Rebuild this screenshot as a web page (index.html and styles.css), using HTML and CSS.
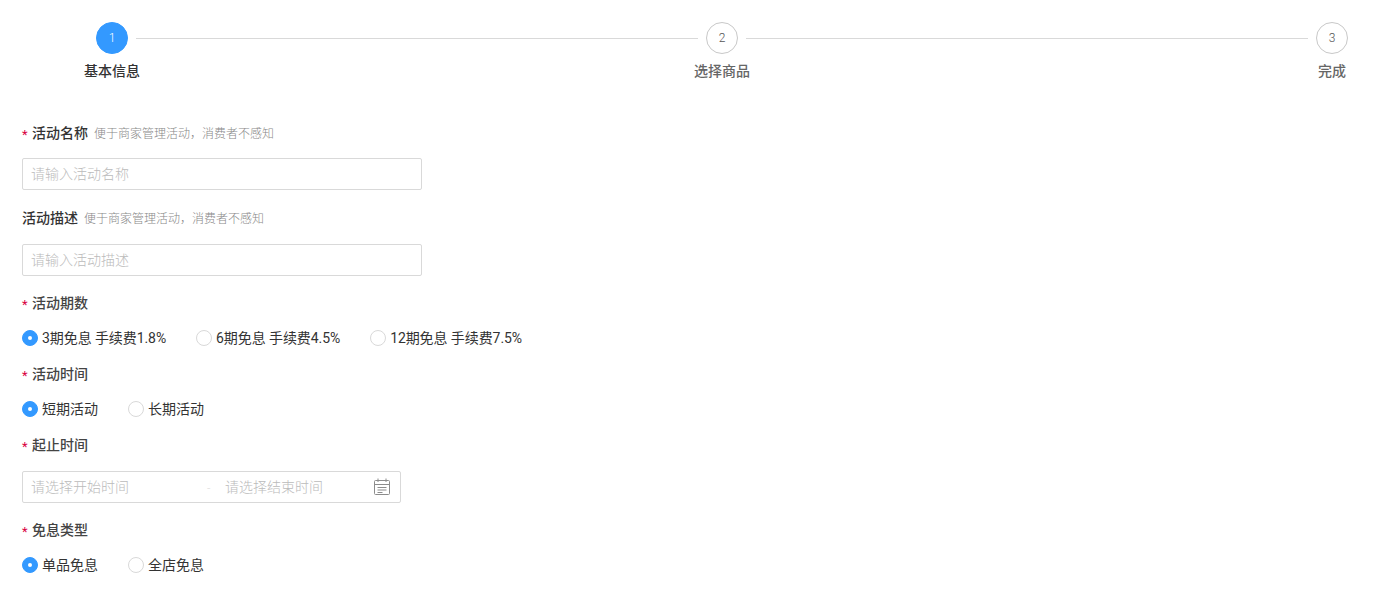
FILE: index.html
```html
<!DOCTYPE html>
<html lang="zh">
<head>
<meta charset="utf-8">
<title>活动</title>
<link rel="stylesheet" href="styles.css">
</head>
<body>
<div class="steps">
  <div class="step active"><span class="dot">1</span><span class="step-label">基本信息</span></div>
  <div class="line"></div>
  <div class="step"><span class="dot">2</span><span class="step-label">选择商品</span></div>
  <div class="line"></div>
  <div class="step"><span class="dot">3</span><span class="step-label">完成</span></div>
</div>
<form class="form">
  <div class="item item-name">
    <div class="label label-strong"><i class="req">*</i><b>活动名称</b><span class="hint">便于商家管理活动，消费者不感知</span></div>
    <div class="input">请输入活动名称</div>
  </div>
  <div class="item item-desc">
    <div class="label label-strong"><b>活动描述</b><span class="hint">便于商家管理活动，消费者不感知</span></div>
    <div class="input">请输入活动描述</div>
  </div>
  <div class="item item-radio">
    <div class="label"><i class="req">*</i><b>活动期数</b></div>
    <div class="radios radios-fee">
      <span class="radio on"><i></i>3期免息 手续费1.8%</span>
      <span class="radio"><i></i>6期免息 手续费4.5%</span>
      <span class="radio"><i></i>12期免息 手续费7.5%</span>
    </div>
  </div>
  <div class="item item-radio">
    <div class="label"><i class="req">*</i><b>活动时间</b></div>
    <div class="radios">
      <span class="radio on"><i></i>短期活动</span>
      <span class="radio"><i></i>长期活动</span>
    </div>
  </div>
  <div class="item item-date">
    <div class="label"><i class="req">*</i><b>起止时间</b></div>
    <div class="date">
      <span class="date-start">请选择开始时间</span>
      <span class="date-sep">-</span>
      <span class="date-end">请选择结束时间</span>
      <svg class="cal" width="18" height="18" viewBox="0 0 18 18" fill="none" stroke="#8c8c8c" stroke-width="1">
        <rect x="1.5" y="2.5" width="15" height="14" rx="1"/>
        <path d="M1.5 6.5h15M5 .5v3.5M13 .5v3.5M4.5 9.5h9M4.5 12h9M4.5 14.5h5"/>
      </svg>
    </div>
  </div>
  <div class="item item-radio">
    <div class="label"><i class="req">*</i><b>免息类型</b></div>
    <div class="radios">
      <span class="radio on"><i></i>单品免息</span>
      <span class="radio"><i></i>全店免息</span>
    </div>
  </div>
</form>
</body>
</html>
```
FILE: styles.css
```css
* { box-sizing: border-box; }
html, body { margin: 0; padding: 0; }
body {
  height: 613px;
  overflow: hidden;
  background: #fff;
  color: #333;
  font-family: Roboto, "Noto Sans CJK SC", sans-serif;
  font-size: 14px;
}
.steps {
  display: flex;
  align-items: flex-start;
  padding: 22px 39px 0 96px;
}
.step {
  width: 32px;
  display: flex;
  flex-direction: column;
  align-items: center;
  flex: none;
}
.dot {
  width: 32px;
  height: 32px;
  border-radius: 50%;
  border: 1px solid #c8c8c8;
  display: flex;
  align-items: center;
  justify-content: center;
  font-size: 12px;
  font-weight: 300;
  color: #555;
}
.step.active .dot { background: #3399ff; border-color: #3399ff; color: #fff; }
.step-label {
  margin-top: 7px;
  line-height: 20px;
  white-space: nowrap;
  font-weight: 500;
  color: #666;
}
.step.active .step-label { color: #333; }
.line {
  flex: 1;
  height: 1px;
  margin: 16px 8px 0;
  background: #d9d9d9;
}
.form { padding: 0 22px; }
.label {
  display: flex;
  align-items: center;
  height: 20px;
  line-height: 20px;
}
.label b { font-weight: 500; color: #444; }
.label-strong b { color: #333; }
.req {
  width: 10px;
  font-style: normal;
  font-size: 13px;
  line-height: 20px;
  padding-top: 3px;
  color: #d9003f;
}
.hint { margin-left: 6px; padding-top: 2px; font-size: 12px; font-weight: 300; color: #888; }
.item-name { margin-top: 42px; }
.item-name .input { margin-top: 15px; }
.item-desc { margin-top: 18px; }
.item-desc .input { margin-top: 16px; }
.input {
  width: 400px;
  height: 32px;
  padding: 0 8px;
  border: 1px solid #d9d9d9;
  border-radius: 2px;
  line-height: 30px;
  font-weight: 300;
  color: #bbb;
}
.item-radio, .item-date { margin-top: 17px; }
.item-radio .radios { margin-top: 14px; }
.radios {
  display: flex;
  gap: 30px;
  height: 20px;
  align-items: center;
  color: #333;
}
.radios-fee { letter-spacing: -0.08px; }
.radio { display: flex; align-items: center; }
.radio i {
  width: 16px;
  height: 16px;
  margin: 2px 4px 0 0;
  border-radius: 50%;
  border: 1px solid #d9d9d9;
  background: #fff;
  display: flex;
  align-items: center;
  justify-content: center;
}
.radio.on i { background: #3399ff; border-color: #3399ff; }
.radio.on i::after {
  content: "";
  width: 4px;
  height: 4px;
  border-radius: 50%;
  background: #fff;
}
.item-date .date { margin-top: 16px; }
.date {
  width: 379px;
  height: 32px;
  padding: 0 9px 2px 8px;
  border: 1px solid #d9d9d9;
  border-radius: 2px;
  display: flex;
  align-items: center;
  font-weight: 300;
  color: #bbb;
}
.date-start { width: 176px; }
.date-sep { width: 18px; padding-top: 6px; font-size: 12px; color: #ddd; }
.date-end { flex: 1; }
.cal { flex: none; margin-top: 2px; }
```
